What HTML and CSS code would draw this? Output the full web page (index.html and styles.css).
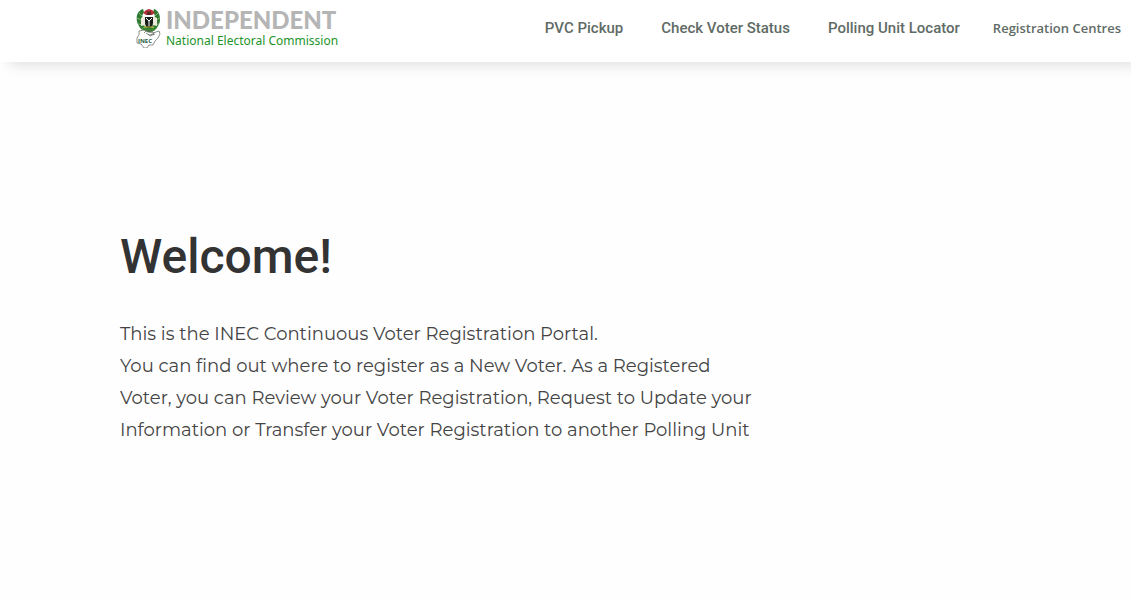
FILE: index.html
```html
<!DOCTYPE html>
<html lang="en">
<head>
    <meta charset="UTF-8">
    <meta name="viewport" content="width=device-width, initial-scale=1.0">
    <title>INEC Continuous Voter Registration</title>
    <link rel="stylesheet" href="styles.css">
</head>
<body>
    <header class="header">
        <a class="logo" href="#">
            <svg class="logo-mark" viewBox="0 0 25 40" width="25" height="40" aria-hidden="true">
                <!-- wreath -->
                <path d="M7 1C0 3-1 12 3 18c2 4 6 6 10 6s7-2 9-6c4-6 2-15-4-17l-1 3c3 4 3 10-1 14H9C5 15 5 9 8 4z" fill="#2f7a33"/>
                <path d="M3 5l4 4M1 10l6 3M2 16l6 1M6 21l4-3M22 5l-4 4M24 10l-6 3M23 16l-6 1M19 21l-4-3" stroke="#9fc486" stroke-width=".8"/>
                <!-- coat of arms -->
                <path d="M7 5l3-3 3-1 3 1 3 3-3 2h-6z" fill="#b5343a"/>
                <path d="M11 3l2 1 2-1v4h-4z" fill="#5c2a24"/>
                <path d="M9 9h8v6c0 3-2 4-4 5-2-1-4-2-4-5z" fill="#171f18"/>
                <path d="M10 10l3 3 3-3M13 13v5" stroke="#fff" stroke-width="1" fill="none"/>
                <path d="M5 10l4-2 0 9-4 1zM21 10l-4-2 0 9 4 1z" fill="#eeeade"/>
                <path d="M6 19c3 2 11 2 14 0l-2 4H8z" fill="#3d8930"/>
                <path d="M8 19h10" stroke="#c9b83e" stroke-width="1"/>
                <!-- map outline and hand -->
                <path d="M3 23l5-1 4 2 5 1 6-2 1 3-2 4-3 3-2 4-4 0-2 3H8l-3-4-4-1v-5l2-3z" fill="#fff" stroke="#596159" stroke-width=".7"/>
                <path d="M8 25l3-3 5 1 2 3-5 1-3-2M12 26l2 2 5-2" fill="none" stroke="#596159" stroke-width=".7"/>
                <text class="logo-abbr" x="2" y="35">INEC</text>
            </svg>
            <span class="logo-text">
                <span class="logo-title">INDEPENDENT</span>
                <span class="logo-subtitle">National Electoral Commission</span>
            </span>
        </a>
        <nav class="nav">
            <a class="nav-link" href="#">PVC Pickup</a>
            <a class="nav-link" href="#">Check Voter Status</a>
            <a class="nav-link" href="#">Polling Unit Locator</a>
            <a class="nav-link nav-link-alt" href="#">Registration Centres</a>
        </nav>
    </header>

    <main class="welcome">
        <h1>Welcome!</h1>
        <p>
            This is the INEC Continuous Voter Registration Portal.<br>
            You can find out where to register as a New Voter. As a Registered
            Voter, you can Review your Voter Registration, Request to Update your
            Information or Transfer your Voter Registration to another Polling Unit
        </p>
    </main>
</body>
</html>
```
FILE: styles.css
```css
body {
    margin: 0;
    background-color: #fefefe;
    color: #333;
    font-family: Roboto, "Liberation Sans", sans-serif;
}
.header {
    display: flex;
    justify-content: space-between;
    align-items: flex-start;
    box-sizing: border-box;
    height: 62px;
    padding: 8px 10px 0 136px;
    background-color: #fff;
    box-shadow: 10px 2px 14px rgba(0, 0, 0, 0.14);
}
.logo {
    display: flex;
    gap: 5px;
    text-decoration: none;
}
.logo-abbr {
    font: bold 6px "Open Sans", sans-serif;
    fill: #1c5b40;
}
.logo-text {
    display: flex;
    flex-direction: column;
    white-space: nowrap;
}
.logo-title {
    font: 900 24px/24px Lato, sans-serif;
    color: #b5b5b5;
}
.logo-subtitle {
    font: 12px/18px "Noto Sans", sans-serif;
    color: #23942a;
}
.nav {
    display: flex;
    align-items: baseline;
    gap: 38px;
    padding-top: 10px;
    white-space: nowrap;
}
.nav-link {
    color: #5f6b66;
    font-size: 15px;
    font-weight: 500;
    line-height: 20px;
    text-decoration: none;
}
.nav-link-alt {
    font-family: "Open Sans", sans-serif;
    font-size: 13px;
    font-weight: 600;
    margin-left: -5px;
}
.welcome {
    max-width: 640px;
    padding: 165px 20px 0 120px;
}
.welcome h1 {
    margin: 0;
    font-size: 48px;
    font-weight: 500;
    line-height: 60px;
}
.welcome p {
    margin: 31px 0 0;
    color: #444;
    font-family: Montserrat, Inter, sans-serif;
    font-size: 18px;
    font-weight: 400;
    line-height: 32px;
}
```
